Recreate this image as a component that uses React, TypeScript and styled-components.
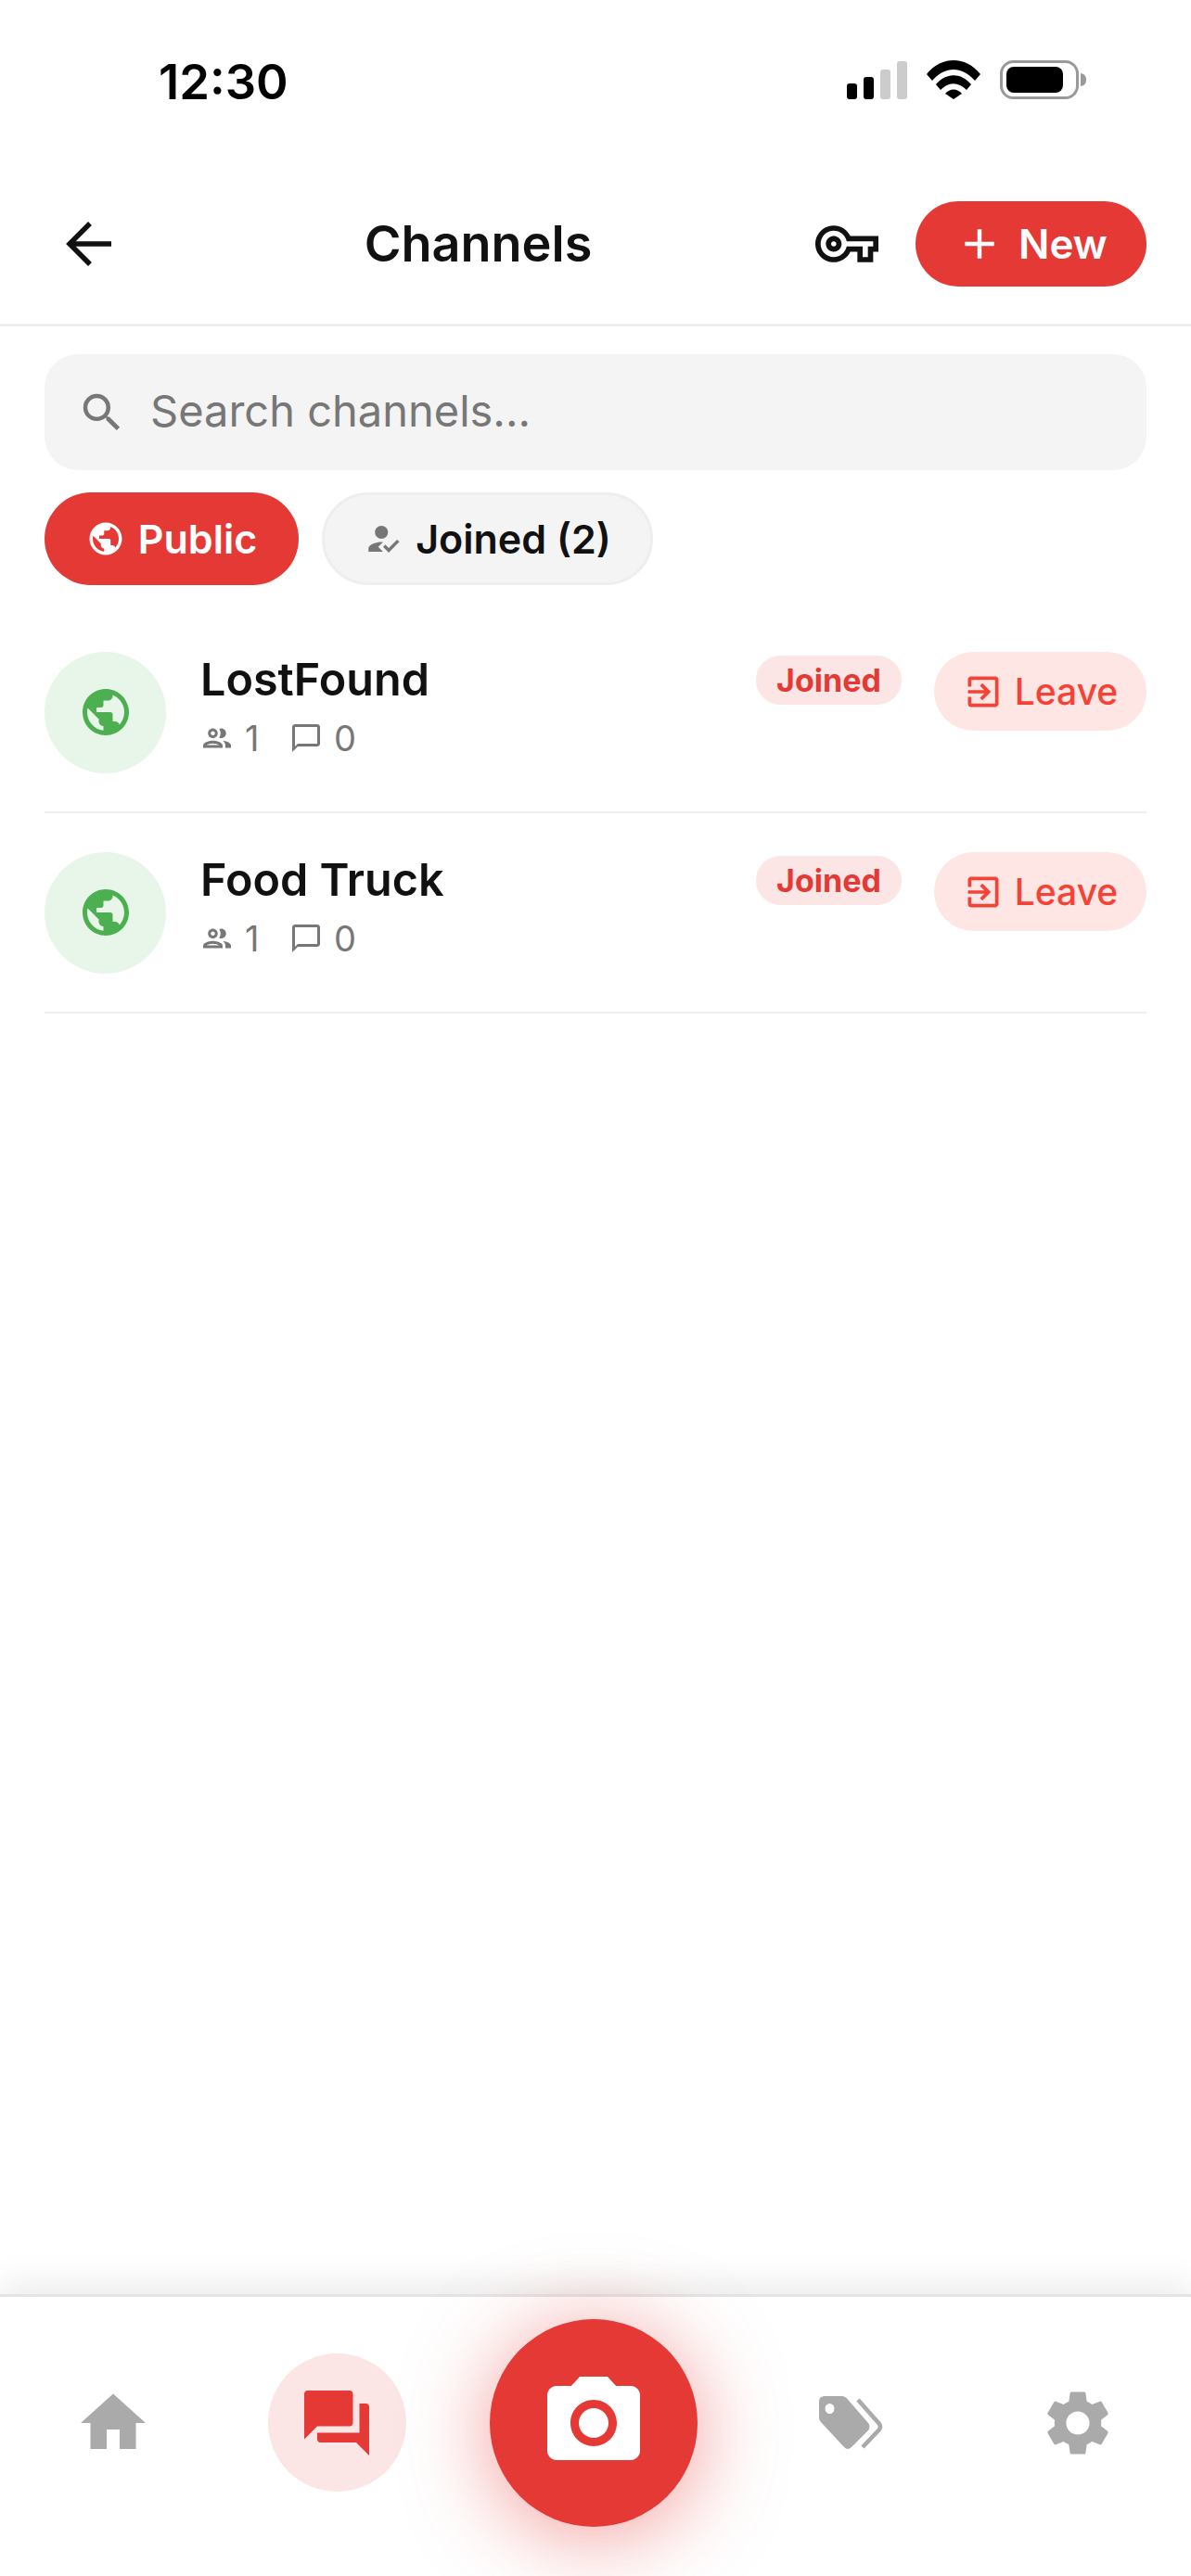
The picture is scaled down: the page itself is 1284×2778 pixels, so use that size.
import React from "react";
import styled, { createGlobalStyle } from "styled-components";
import {
  MdAdd,
  MdCameraAlt,
  MdForum,
  MdHome,
  MdHowToReg,
  MdOutlineChatBubbleOutline,
  MdOutlineExitToApp,
  MdOutlineGroup,
  MdOutlineVpnKey,
  MdPublic,
  MdSearch,
  MdSettings,
} from "react-icons/md";

const RED = "#e53935";

const Global = createGlobalStyle`
  html, body { margin: 0; padding: 0; background: #fff; }
  body { font-family: Inter, "Noto Sans", sans-serif; color: #111; }
  * { box-sizing: border-box; }
`;

const Page = styled.div`
  width: 1284px;
  height: 2778px;
  display: flex;
  flex-direction: column;
  background: #fff;
  overflow: hidden;
`;

const StatusBar = styled.div`
  height: 176px;
  flex: none;
  display: flex;
  justify-content: space-between;
  align-items: flex-start;
  padding: 58px 112px 0 171px;
`;

const Time = styled.span`
  font-size: 52.5px;
  line-height: 60px;
  font-weight: 600;
  color: #000;
`;

const StatusIcons = styled.div`
  display: flex;
  align-items: flex-end;
  margin-top: 7px;
  gap: 21px;
`;

const Signal = styled.div`
  display: flex;
  align-items: flex-end;
  gap: 7px;
  height: 41px;
`;

const Bar = styled.span<{ $h: number; $on?: boolean }>`
  width: 11px;
  height: ${(p) => p.$h}px;
  border-radius: 3px;
  background: ${(p) => (p.$on ? "#000" : "#ccc")};
`;

const Header = styled.header`
  height: 176px;
  flex: none;
  display: flex;
  align-items: center;
  padding: 0 48px;
  border-bottom: 3px solid #eee;
`;

const BackButton = styled.div`
  width: 96px;
  flex: none;
  display: flex;
  justify-content: center;
`;

const Title = styled.h1`
  flex: 1;
  margin: 0;
  padding-left: 8px;
  text-align: center;
  font-size: 54px;
  line-height: 64px;
  font-weight: 600;
  color: #111;
`;

const HeaderActions = styled.div`
  display: flex;
  align-items: center;
  gap: 40px;
`;

const KeyIcon = styled(MdOutlineVpnKey)`
  font-size: 68px;
  color: #111;
  display: block;
`;

const NewButton = styled.div`
  width: 249px;
  height: 92px;
  border-radius: 46px;
  background: ${RED};
  color: #fff;
  display: flex;
  align-items: center;
  padding-left: 42px;
  gap: 15px;
  font-size: 44px;
  font-weight: 600;
  svg { font-size: 54px; display: block; }
`;

const SearchBox = styled.div`
  margin: 30px 48px 0;
  height: 125px;
  flex: none;
  border-radius: 36px;
  background: #f4f4f4;
  display: flex;
  align-items: center;
  padding-left: 35px;
  gap: 25px;
  color: #777;
  svg { font-size: 54px; display: block; color: #777; }
`;

const SearchPlaceholder = styled.span`
  font-size: 47px;
  line-height: 60px;
  margin-bottom: 3px;
  color: #777;
`;

const Chips = styled.div`
  margin: 24px 48px 0;
  display: flex;
  gap: 25px;
  flex: none;
`;

const Chip = styled.div<{ $active?: boolean; $w: number }>`
  width: ${(p) => p.$w}px;
  height: 100px;
  border-radius: 50px;
  display: flex;
  align-items: center;
  justify-content: center;
  gap: 14px;
  font-size: 43px;
  font-weight: 600;
  background: ${(p) => (p.$active ? RED : "#f4f4f4")};
  color: ${(p) => (p.$active ? "#fff" : "#111")};
  border: ${(p) => (p.$active ? "none" : "3px solid #eeeeee")};
  svg { font-size: 42px; display: block; color: ${(p) => (p.$active ? "#fff" : "#777")}; }
`;

const List = styled.div`
  margin: 30px 48px 0;
  flex: 1;
`;

const Row = styled.div`
  height: 216px;
  display: flex;
  align-items: center;
  border-bottom: 2px solid #f0f0f0;
`;

const Avatar = styled.div`
  width: 131px;
  height: 131px;
  border-radius: 50%;
  background: #e8f5e9;
  color: #4caf50;
  flex: none;
  display: flex;
  align-items: center;
  justify-content: center;
  svg { font-size: 60px; display: block; }
`;

const Info = styled.div`
  flex: 1;
  margin-left: 37px;
  display: flex;
  flex-direction: column;
  gap: 12px;
  margin-top: -15px;
`;

const Name = styled.div`
  font-size: 48.5px;
  line-height: 58px;
  font-weight: 600;
  color: #111;
`;

const Meta = styled.div`
  display: flex;
  align-items: center;
  font-size: 38px;
  line-height: 44px;
  color: #777;
`;

const MetaItem = styled.span`
  display: flex;
  align-items: center;
  gap: 12px;
  width: 96px;
  svg { font-size: 36px; display: block; color: #777; }
`;

const JoinedBadge = styled.span`
  align-self: flex-start;
  margin-top: 46px;
  width: 157px;
  height: 53px;
  border-radius: 27px;
  background: #fbe5e5;
  color: ${RED};
  font-size: 34px;
  font-weight: 700;
  display: flex;
  align-items: center;
  justify-content: center;
`;

const LeaveButton = styled.div`
  align-self: flex-start;
  margin: 42px 0 0 35px;
  width: 229px;
  height: 85px;
  border-radius: 43px;
  background: #fde6e4;
  color: #f44336;
  font-size: 39px;
  font-weight: 500;
  display: flex;
  align-items: center;
  justify-content: center;
  gap: 12px;
  svg { font-size: 44px; display: block; }
`;

const Nav = styled.nav`
  position: relative;
  height: 304px;
  flex: none;
  display: grid;
  grid-template-columns: 243px 240px 314px 242px 245px;
  align-items: center;
  justify-items: center;
  padding-bottom: 30px;
  background: #fff;
  border-top: 3px solid #e4e4e4;
  box-shadow: 0 -12px 36px rgba(0, 0, 0, 0.08);
`;

const NavIcon = styled.div`
  color: #aaa;
  display: flex;
  svg { display: block; }
`;

const ActiveTab = styled.div`
  width: 149px;
  height: 149px;
  border-radius: 50%;
  background: #fce5e5;
  color: ${RED};
  display: flex;
  align-items: center;
  justify-content: center;
  svg { font-size: 84px; display: block; }
`;

const CameraButton = styled.div`
  width: 224px;
  height: 224px;
  border-radius: 50%;
  background: ${RED};
  color: #fff;
  display: flex;
  align-items: center;
  justify-content: center;
  box-shadow: 0 10px 90px rgba(229, 57, 53, 0.5);
  svg { font-size: 120px; display: block; }
`;

const channels = ["LostFound", "Food Truck"];

export default function App() {
  return (
    <Page>
      <Global />
      <StatusBar>
        <Time>12:30</Time>
        <StatusIcons>
          <Signal>
            <Bar $h={17} $on />
            <Bar $h={24} $on />
            <Bar $h={32} />
            <Bar $h={41} />
          </Signal>
          <svg width="58" height="42" viewBox="0 0 58 42" style={{ display: "block" }}>
            <path d="M0 15 C16 -5 42 -5 58 15 L52 22 C38 6 20 6 6 22 Z" fill="#000" />
            <path d="M10 26 C21 13 37 13 48 26 L43 32 C34 23 24 23 15 32 Z" fill="#000" />
            <path d="M20 36 C25 30 33 30 38 36 L29 42 Z" fill="#000" />
          </svg>
          <svg width="94" height="42" viewBox="0 0 94 42" style={{ display: "block" }}>
            <rect x="1.5" y="1.5" width="82" height="39" rx="13" fill="none" stroke="#999" strokeWidth="3" />
            <rect x="7" y="7" width="61" height="28" rx="8" fill="#000" />
            <path d="M87 14 C92 15 93 18 93 21 C93 24 92 27 87 28 Z" fill="#999" />
          </svg>
        </StatusIcons>
      </StatusBar>

      <Header>
        <BackButton>
          <svg width="50" height="50" viewBox="0 0 50 50" style={{ display: "block" }}>
            <path d="M49 25 H4 M26 3 L4 25 L26 47" fill="none" stroke="#111" strokeWidth="5.5" />
          </svg>
        </BackButton>
        <Title>Channels</Title>
        <HeaderActions>
          <KeyIcon />
          <NewButton>
            <MdAdd />
            New
          </NewButton>
        </HeaderActions>
      </Header>

      <SearchBox>
        <MdSearch />
        <SearchPlaceholder>Search channels...</SearchPlaceholder>
      </SearchBox>

      <Chips>
        <Chip $active $w={274}>
          <MdPublic />
          Public
        </Chip>
        <Chip $w={357}>
          <MdHowToReg />
          Joined (2)
        </Chip>
      </Chips>

      <List>
        {channels.map((name) => (
          <Row key={name}>
            <Avatar>
              <MdPublic />
            </Avatar>
            <Info>
              <Name>{name}</Name>
              <Meta>
                <MetaItem>
                  <MdOutlineGroup />1
                </MetaItem>
                <MetaItem>
                  <MdOutlineChatBubbleOutline />0
                </MetaItem>
              </Meta>
            </Info>
            <JoinedBadge>Joined</JoinedBadge>
            <LeaveButton>
              <MdOutlineExitToApp />
              Leave
            </LeaveButton>
          </Row>
        ))}
      </List>

      <Nav>
        <NavIcon>
          <MdHome size={84} />
        </NavIcon>
        <ActiveTab>
          <MdForum />
        </ActiveTab>
        <CameraButton>
          <MdCameraAlt />
        </CameraButton>
        <NavIcon>
          <svg width="70" height="58" viewBox="0 0 70 58" style={{ display: "block" }}>
            <path
              fill="currentColor"
              fillRule="evenodd"
              d="M6 0 H25 Q28 0 30 2.500 L53 29 Q56 33 53 37 L35 55 Q31 59 27 55 L2 28 Q0 26 0 23 V6 Q0 0 6 0 Z M11.500 8 A5 5.500 0 1 0 11.510 19 A5 5.500 0 1 0 11.500 8 Z"
            />
            <path d="M42 4 L65 30 Q67 33 65 36 L47 55" fill="none" stroke="currentColor" strokeWidth="4.500" />
          </svg>
        </NavIcon>
        <NavIcon>
          <MdSettings size={84} />
        </NavIcon>
      </Nav>
    </Page>
  );
}
